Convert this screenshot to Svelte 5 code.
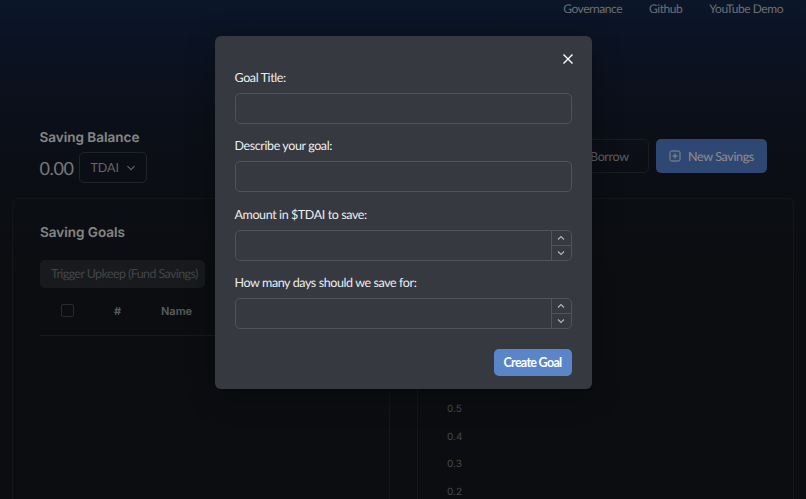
<script>
  const ticks = ['0.5', '0.4', '0.3', '0.2'];
</script>

<div class="page">
  <nav class="nav">
    <span>Governance</span>
    <span>Github</span>
    <span>YouTube Demo</span>
  </nav>

  <section class="head">
    <div class="balance">
      <h2>Saving Balance</h2>
      <div class="amount">
        <span class="value">0.00</span>
        <div class="select">
          <span>TDAI</span>
          <svg width="10" height="10" viewBox="0 0 10 10"><path d="M1.5 3.2 5 6.7 8.5 3.2" /></svg>
        </div>
      </div>
    </div>
    <div class="actions">
      <div class="btn ghost">Borrow</div>
      <div class="btn primary">
        <svg width="12" height="12" viewBox="0 0 12 12"><rect x="1" y="1" width="10" height="10" rx="1.5" /><path d="M6 3.5v5M3.5 6h5" /></svg>
        New Savings
      </div>
    </div>
  </section>

  <section class="cards">
    <div class="card goals">
      <h3>Saving Goals</h3>
      <div class="trigger">Trigger Upkeep (Fund Savings)</div>
      <div class="thead">
        <span class="check"></span>
        <span class="hash">#</span>
        <span class="name">Name</span>
      </div>
    </div>
    <div class="card chart">
      {#each ticks as t}
        <div class="tick">{t}</div>
      {/each}
    </div>
  </section>

  <div class="overlay">
    <form class="modal">
      <button type="button" class="close" aria-label="Close">
        <svg width="12" height="12" viewBox="0 0 12 12"><path d="M1.5 1.5l9 9M10.5 1.5l-9 9" /></svg>
      </button>

      <label class="field">
        <span>Goal Title:</span>
        <div class="input"></div>
      </label>
      <label class="field">
        <span>Describe your goal:</span>
        <div class="input"></div>
      </label>
      <label class="field">
        <span>Amount in $TDAI to save:</span>
        <div class="input number">
          <div class="stepper">
            <div><svg width="10" height="10" viewBox="0 0 10 10"><path d="M2 6.5 5 3.5 8 6.5" /></svg></div>
            <div><svg width="10" height="10" viewBox="0 0 10 10"><path d="M2 3.5 5 6.5 8 3.5" /></svg></div>
          </div>
        </div>
      </label>
      <label class="field">
        <span>How many days should we save for:</span>
        <div class="input number">
          <div class="stepper">
            <div><svg width="10" height="10" viewBox="0 0 10 10"><path d="M2 6.5 5 3.5 8 6.5" /></svg></div>
            <div><svg width="10" height="10" viewBox="0 0 10 10"><path d="M2 3.5 5 6.5 8 3.5" /></svg></div>
          </div>
        </div>
      </label>

      <div class="footer">
        <button type="button" class="create">Create Goal</button>
      </div>
    </form>
  </div>
</div>

<style>
  :global(body) {
    margin: 0;
    background: #14191f;
  }
  .page {
    position: relative;
    width: 806px;
    height: 499px;
    overflow: hidden;
    background: linear-gradient(180deg, #14294a 0%, #14203a 14%, #151c2a 28%, #151a22 42%, #14191f 60%, #14191f 100%);
    font-family: Lato, sans-serif;
    text-rendering: geometricPrecision;
    color: #fff;
  }
  .nav {
    display: flex;
    justify-content: flex-end;
    gap: 27px;
    padding: 1px 23px 0 0;
    height: 17px;
    font-size: 12px;
    letter-spacing: -0.45px;
    line-height: 16px;
    color: #c1c8d2;
  }
  .head {
    display: flex;
    justify-content: space-between;
    align-items: flex-start;
    padding: 112px 39px 0 39.5px;
    height: 68px;
  }
  .balance h2 {
    margin: 0;
    font: 600 13.5px/17px Inter, sans-serif;
    color: #f2f3f5;
  }
  .amount {
    display: flex;
    align-items: center;
    gap: 6px;
    margin-top: 5px;
  }
  .value {
    font-size: 18px;
    letter-spacing: -0.4px;
    color: #d6d9dd;
  }
  .select {
    display: flex;
    align-items: center;
    gap: 7px;
    box-sizing: border-box;
    width: 68px;
    height: 31px;
    padding: 0 10px;
    border: 1px solid #3a424e;
    border-radius: 5px;
    font-size: 12.5px;
    color: #b4b8bd;
  }
  .select svg path {
    fill: none;
    stroke: #b4b8bd;
    stroke-width: 1.2;
  }
  .actions {
    display: flex;
    gap: 7px;
    margin-top: 9px;
  }
  .btn {
    display: flex;
    align-items: center;
    box-sizing: border-box;
    height: 34px;
    border-radius: 5px;
    font-size: 12.5px;
    letter-spacing: -0.35px;
  }
  .ghost {
    width: 100px;
    padding-left: 40px;
    border: 1px solid #2c323b;
    color: #a8adb4;
  }
  .primary {
    width: 111px;
    gap: 7px;
    padding-left: 13px;
    background: #5582d2;
    color: #fff;
  }
  .primary svg rect,
  .primary svg path {
    fill: none;
    stroke: #fff;
    stroke-width: 1;
  }
  .cards {
    display: grid;
    grid-template-columns: 378px 377px;
    gap: 27px;
    padding: 0 12px;
  }
  .card {
    box-sizing: border-box;
    height: 320px;
    border: 1px solid #22272e;
    border-radius: 6px;
  }
  .goals {
    padding: 26px 0 0 27px;
  }
  .goals h3 {
    margin: 0;
    font: 600 13.5px/17px Inter, sans-serif;
    color: #f0f1f3;
  }
  .trigger {
    box-sizing: border-box;
    width: 165px;
    height: 28px;
    margin-top: 18px;
    padding-left: 11px;
    border-radius: 5px;
    background: #2c3036;
    font-size: 12.5px;
    letter-spacing: -0.6px;
    line-height: 28px;
    white-space: nowrap;
    color: #7a7f85;
  }
  .thead {
    display: flex;
    align-items: center;
    box-sizing: border-box;
    height: 48px;
    padding-bottom: 2px;
    border-bottom: 1px solid #2b2f35;
    font: 600 11px/14px Inter, sans-serif;
    color: #a3a7ac;
  }
  .check {
    box-sizing: border-box;
    width: 13px;
    height: 13px;
    margin-left: 21px;
    border: 1px solid #494e55;
    border-radius: 2px;
  }
  .hash {
    margin-left: 40px;
    width: 47px;
  }
  .chart {
    padding: 203px 0 0 29px;
  }
  .tick {
    height: 27.5px;
    font: 400 10px/14px Inter, sans-serif;
    color: #7f8389;
  }
  .overlay {
    position: absolute;
    inset: 0;
    display: flex;
    justify-content: center;
    align-items: flex-start;
    background: rgba(0, 0, 0, 0.45);
  }
  .modal {
    position: relative;
    box-sizing: border-box;
    width: 377px;
    height: 353px;
    margin-top: 36px;
    padding: 33px 20px 0;
    border-radius: 6px;
    background: #36393f;
    box-shadow: 0 6px 30px rgba(0, 0, 0, 0.3);
  }
  .close {
    position: absolute;
    top: 17px;
    right: 18px;
    display: flex;
    padding: 0;
    border: 0;
    background: none;
  }
  .close svg path {
    fill: none;
    stroke: #fff;
    stroke-width: 1.4;
  }
  .field {
    display: block;
    height: 68.4px;
  }
  .field > span {
    display: block;
    height: 24px;
    font-size: 12.5px;
    letter-spacing: -0.4px;
    line-height: 18px;
    color: #eceef0;
  }
  .input {
    box-sizing: border-box;
    height: 31px;
    border: 1px solid #505459;
    border-radius: 5px;
  }
  .number {
    display: flex;
    justify-content: flex-end;
  }
  .stepper {
    display: flex;
    flex-direction: column;
    box-sizing: border-box;
    width: 20px;
    border-left: 1px solid #505459;
  }
  .stepper div {
    flex: 1;
    display: flex;
    align-items: center;
    justify-content: center;
  }
  .stepper div + div {
    border-top: 1px solid #505459;
  }
  .stepper path {
    fill: none;
    stroke: #b4b7bb;
    stroke-width: 1.1;
  }
  .footer {
    display: flex;
    justify-content: flex-end;
    margin-top: 6px;
  }
  .create {
    width: 78px;
    height: 27px;
    padding: 0;
    border: 0;
    border-radius: 5px;
    background: #5a86c9;
    color: #fff;
    font: 700 12.5px/27px Lato, sans-serif;
    letter-spacing: -0.7px;
  }
</style>
